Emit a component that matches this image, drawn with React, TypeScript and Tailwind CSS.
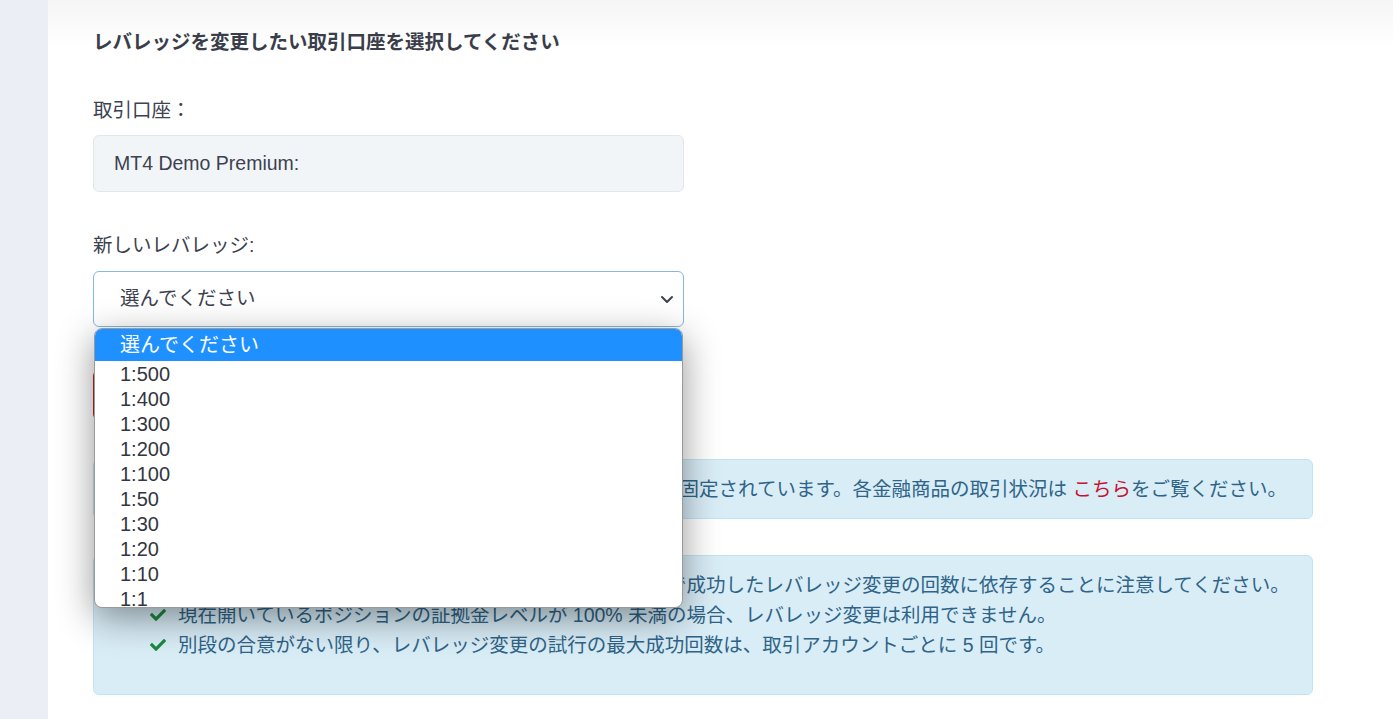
import { FaCheck } from 'react-icons/fa';

const options = ['1:500', '1:400', '1:300', '1:200', '1:100', '1:50', '1:30', '1:20', '1:10', '1:1'];

const notes = [
    'レバレッジの変更が可能かどうかは、過去30日間に口座で成功したレバレッジ変更の回数に依存することに注意してください。',
    '現在開いているポジションの証拠金レベルが 100% 未満の場合、レバレッジ変更は利用できません。',
    '別段の合意がない限り、レバレッジ変更の試行の最大成功回数は、取引アカウントごとに 5 回です。',
];

export default function App() {
    return (
        <div
            className="flex h-[719px] w-[1393px] overflow-hidden bg-white text-[#3d4150]"
            style={{ fontFamily: '"Liberation Sans", "Noto Sans CJK JP", sans-serif' }}
        >
            <aside className="w-[48px] shrink-0 bg-[#eceef5]" />

            <main className="flex-1 bg-[linear-gradient(to_bottom,#f5f5f6_0px,#ffffff_48px)] pl-[45px] pr-[80px] pt-[29px]">
                <h1 className="text-[19.5px] font-bold leading-[26px] text-[#3a3d4a]">
                    レバレッジを変更したい取引口座を選択してください
                </h1>

                <label className="mt-[42px] block text-[19.5px] leading-[26px]">取引口座：</label>
                <div className="mt-[12px] flex h-[57px] w-[591px] items-center rounded-md border border-[#e3e7eb] bg-[#f1f5f8] px-[20px] text-[19.5px]">
                    MT4 Demo Premium:
                </div>

                <label className="mt-[40px] block text-[19.5px] leading-[26px]">新しいレバレッジ:</label>
                <div className="relative mt-[13px] w-[591px]">
                    <div className="flex h-[56px] items-center justify-between rounded-md border border-[#84b8de] bg-white pl-[26px] pr-[8px] text-[19.5px]">
                        <span>選んでください</span>
                        <svg width="16" height="16" viewBox="0 0 16 16" fill="none" stroke="#3d4150" strokeWidth="2" strokeLinecap="round" strokeLinejoin="round">
                            <path d="M3 6l5 5 5-5" />
                        </svg>
                    </div>

                    {/* open native list */}
                    <div className="absolute left-[1px] top-[57px] z-10 h-[280px] w-[589px] overflow-hidden rounded-lg border border-[#9a9a9a] bg-white text-[20px] text-[#33363f] shadow-[0_10px_36px_rgba(0,0,0,0.42)]">
                        <div className="flex h-[32px] items-center bg-[#1e90ff] pl-[25px] text-white">選んでください</div>
                        {options.map((o) => (
                            <div key={o} className="flex h-[25px] items-center pl-[25px]">
                                {o}
                            </div>
                        ))}
                    </div>

                    <button className="mt-[43px] h-[50px] w-[220px] rounded-md border border-[#b8231b] text-[18px] text-[#b8231b]">
                        レバレッジを変更
                    </button>
                </div>

                <div className="mt-[39px] rounded-md border border-[#bfe5f0] bg-[#d9edf7] px-[20px] py-[17px] text-[19.5px] leading-[24px] text-[#2f6488]">
                    一部の金融商品のレバレッジは、口座のレバレッジ値に関係なく固定されています。各金融商品の取引状況は{' '}
                    <a className="text-[#c8102e]">こちら</a>をご覧ください。
                </div>

                <div className="mt-[36px] rounded-md border border-[#bfe5f0] bg-[#d9edf7] pb-[34px] pl-[56px] pt-[14px] text-[19.5px] leading-[30px] text-[#2f6488]">
                    <ul>
                        {notes.map((n) => (
                            <li key={n} className="flex items-center gap-[12px]">
                                <FaCheck className="shrink-0 text-[16px] text-[#1b8a3e]" />
                                <span className="whitespace-nowrap">{n}</span>
                            </li>
                        ))}
                    </ul>
                </div>
            </main>
        </div>
    );
}
